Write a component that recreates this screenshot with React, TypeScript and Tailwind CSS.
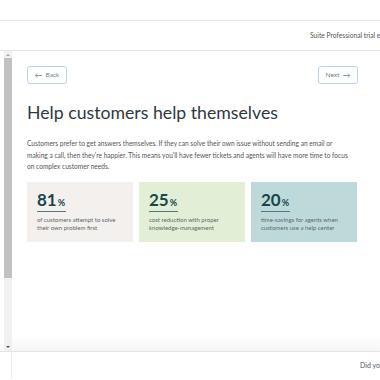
import React from "react";

const font = { fontFamily: 'Lato, "Open Sans", sans-serif' };

function Card({ bg, num, lines }: { bg: string; num: string; lines: string[] }) {
  return (
    <div className={`h-[60px] w-[106px] ${bg} pl-[10px] pt-[9px]`}>
      <div className="flex items-baseline text-[#16474b] leading-none">
        <span className="text-[17px] font-bold">{num}</span>
        <span className="ml-[1px] text-[9px] font-bold">%</span>
      </div>
      <div className="mt-[3px] h-[1.5px] w-[29px] bg-[#4e7a80]" />
      <div className="mt-[4px] text-[6px] leading-[8px] text-[#5d6a6c]">
        {lines.map((l) => (
          <div key={l} className="whitespace-nowrap">{l}</div>
        ))}
      </div>
    </div>
  );
}

export default function App() {
  return (
    <div className="relative h-[380px] w-[380px] overflow-hidden bg-white" style={font}>
      <div className="h-[21px] border-b border-[#e6e6e6]" />
      <div className="flex h-[30px] items-center overflow-hidden border-b border-[#e6e6e6] pl-[310px]">
        <span className="whitespace-nowrap text-[6.7px] text-[#555]">Suite Professional trial ends in 14 days</span>
      </div>
      <div className="relative flex h-[300px]">
        <div className="flex w-[17px] shrink-0 justify-start pl-[4px]">
          <div className="flex w-[8px] flex-col bg-[#f1f1f1]">
            <div className="flex h-[7px] items-center justify-center">
              <div className="h-0 w-0 border-x-[2px] border-b-[2px] border-x-transparent border-b-[#a3a3a3]" />
            </div>
            <div className="h-[220px] bg-[#c1c1c1]" />
            <div className="flex-1" />
            <div className="flex h-[8px] items-center justify-center">
              <div className="h-0 w-0 border-x-[2px] border-t-[2px] border-x-transparent border-t-[#505050]" />
            </div>
          </div>
        </div>
        <div className="min-w-0 flex-1 pl-[10px] pr-[22px] pt-[15px]">
          <div className="flex justify-between">
            <button className="flex h-[18px] w-[40px] items-center justify-center gap-[3px] rounded-[3px] border border-[#b9d3ee] text-[6.5px] text-[#6b7f99]">
              <span className="text-[8px] leading-none">←</span>
              <span>Back</span>
            </button>
            <button className="flex h-[18px] w-[40px] items-center justify-center gap-[3px] rounded-[3px] border border-[#b9d3ee] text-[6.5px] text-[#6b7f99]">
              <span>Next</span>
              <span className="text-[8px] leading-none">→</span>
            </button>
          </div>
          <h1 className="mt-[16px] whitespace-nowrap text-[17.7px] leading-[26px] text-[#2f3941]">Help customers help themselves</h1>
          <p className="mt-[12px] w-[326px] text-[6.6px] leading-[11.5px] text-[#555]">
            Customers prefer to get answers themselves. If they can solve their own issue without sending an email or making a call, then they're happier. This means you'll have fewer tickets and agents will have more time to focus on complex customer needs.
          </p>
          <div className="mt-[9px] flex gap-[6px]">
            <Card bg="bg-[#f3f0ee]" num="81" lines={["of customers attempt to solve", "their own problem first"]} />
            <Card bg="bg-[#e2efd6]" num="25" lines={["cost reduction with proper", "knowledge-management"]} />
            <Card bg="bg-[#bed9da]" num="20" lines={["time-savings for agents when", "customers use a help center"]} />
          </div>
        </div>
        <div className="pointer-events-none absolute bottom-0 left-[12px] right-0 h-[18px] bg-gradient-to-b from-transparent to-[#f6f6f6]" />
      </div>
      <div className="flex h-[28px] border-t border-[#e4e4e4]">
        <div className="w-[12px] shrink-0 border-r border-[#ececec]" />
        <div className="flex min-w-0 flex-1 items-center overflow-hidden pl-[348px]">
          <span className="whitespace-nowrap text-[7px] text-[#555]">Did you know?</span>
        </div>
      </div>
    </div>
  );
}
